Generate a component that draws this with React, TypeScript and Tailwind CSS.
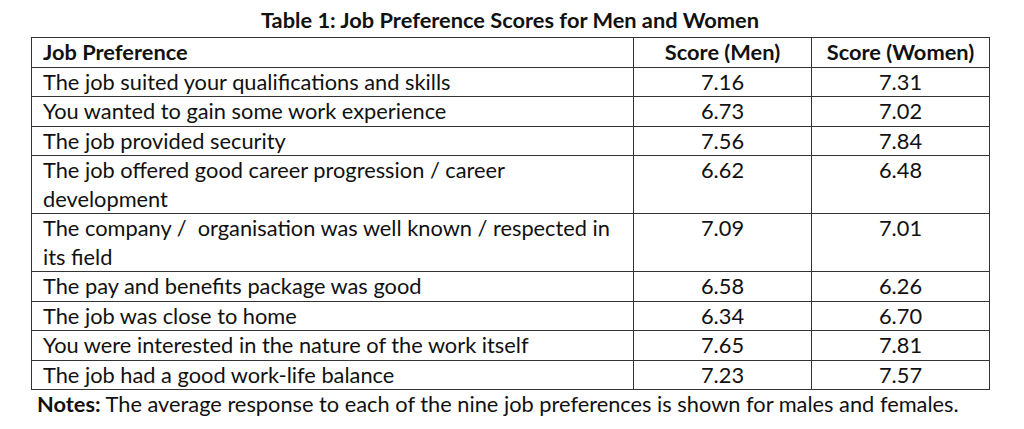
const rows: [string, string, string][] = [
  ['The job suited your qualifications and skills', '7.16', '7.31'],
  ['You wanted to gain some work experience', '6.73', '7.02'],
  ['The job provided security', '7.56', '7.84'],
  ['The job offered good career progression / career development', '6.62', '6.48'],
  ['The company /\u00a0 organisation was well known / respected in its field', '7.09', '7.01'],
  ['The pay and benefits package was good', '6.58', '6.26'],
  ['The job was close to home', '6.34', '6.70'],
  ['You were interested in the nature of the work itself', '7.65', '7.81'],
  ['The job had a good work-life balance', '7.23', '7.57'],
]

export default function App() {
  return (
    <div className="w-[1024px] h-[429px] bg-white text-[#111] font-['Lato','Liberation_Sans',sans-serif] text-[21.8px] overflow-hidden">
      <h1 className="pt-[6px] text-center font-bold leading-[28px] pr-[4px]">
        Table 1: Job Preference Scores for Men and Women
      </h1>

      <table className="ml-[31px] mt-[3px] w-[959px] border-collapse border border-[#333] leading-[28.5px]">
        <thead>
          <tr>
            <th className="w-[602px] border border-[#333] px-[11px] text-left font-bold">Job Preference</th>
            <th className="w-[178px] border border-[#333] text-center font-bold">Score (Men)</th>
            <th className="w-[178px] border border-[#333] text-center font-bold">Score (Women)</th>
          </tr>
        </thead>
        <tbody>
          {rows.map(([label, men, women], i) => (
            <tr key={i}>
              <td className="border border-[#333] pl-[11px] pr-[11px] align-top">{label}</td>
              <td className="border border-[#333] text-center align-top">{men}</td>
              <td className="border border-[#333] text-center align-top">{women}</td>
            </tr>
          ))}
        </tbody>
      </table>

      <p className="pl-[37px] leading-[28px]">
        <span className="font-bold">Notes:</span> The average response to each of the nine job preferences is shown for males and females.
      </p>
    </div>
  )
}
